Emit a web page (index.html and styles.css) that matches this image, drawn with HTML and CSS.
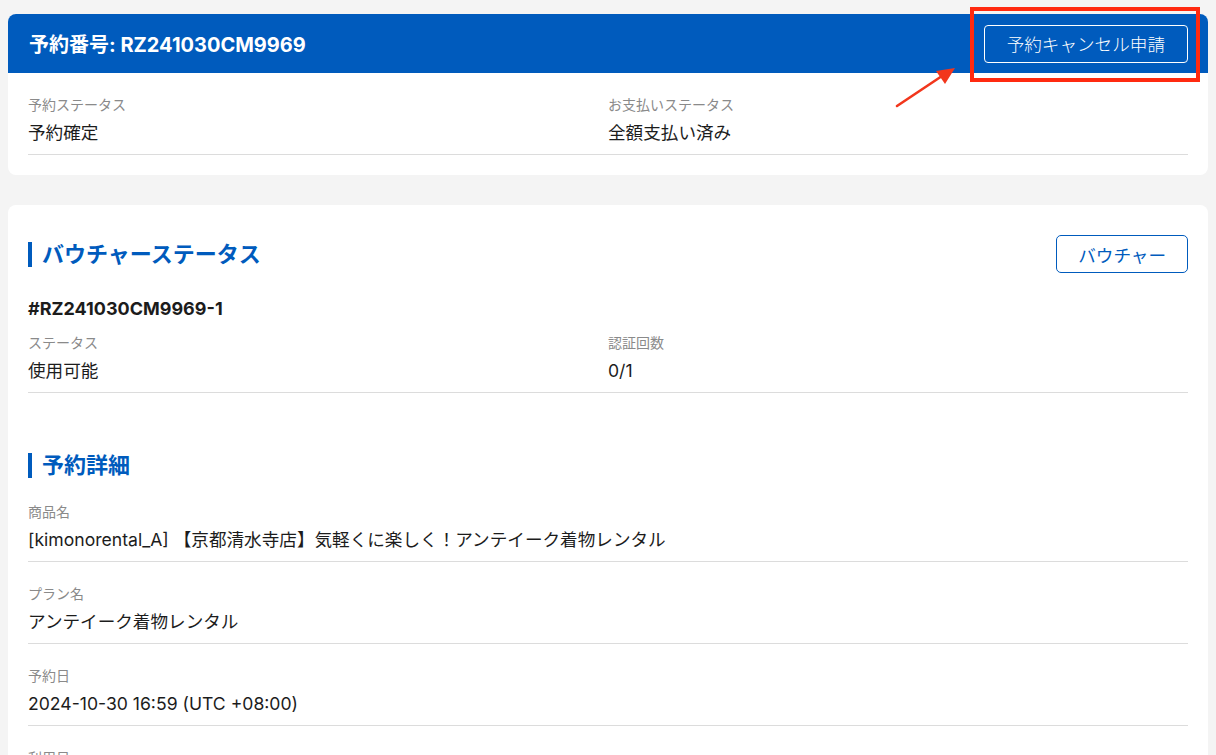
FILE: index.html
```html
<!DOCTYPE html>
<html lang="ja">
<head>
  <meta charset="UTF-8" />
  <meta name="viewport" content="width=device-width, initial-scale=1.0"/>
  <title>予約詳細</title>
  <link rel="stylesheet" href="styles.css">
</head>
<body>

<!-- Reservation summary -->
<div class="card summary">
  <div class="card-header">
    <h1>予約番号: RZ241030CM9969</h1>
    <button class="cancel-btn">予約キャンセル申請</button>
  </div>
  <div class="card-body">
    <div class="info-grid">
      <div class="info">
        <div class="label">予約ステータス</div>
        <div class="value">予約確定</div>
      </div>
      <div class="info">
        <div class="label">お支払いステータス</div>
        <div class="value">全額支払い済み</div>
      </div>
    </div>
  </div>

  <!-- annotation overlay -->
  <div class="mark-box"></div>
  <svg class="mark-arrow" width="70" height="50" viewBox="0 0 70 50">
    <line x1="4" y1="44" x2="52" y2="12" stroke="#f2361c" stroke-width="2.6" stroke-linecap="round"/>
    <polygon points="62,6 43,9 52,22" fill="#f2361c"/>
  </svg>
</div>

<!-- Voucher + details -->
<div class="card detail">
  <div class="section-head">
    <h2 class="section-title">バウチャーステータス</h2>
    <button class="outline-btn">バウチャー</button>
  </div>

  <div class="voucher-id">#RZ241030CM9969-1</div>
  <div class="info-grid">
    <div class="info">
      <div class="label">ステータス</div>
      <div class="value">使用可能</div>
    </div>
    <div class="info">
      <div class="label">認証回数</div>
      <div class="value">0/1</div>
    </div>
  </div>

  <h2 class="section-title detail-title">予約詳細</h2>

  <div class="info">
    <div class="label">商品名</div>
    <div class="value">[kimonorental_A] 【京都清水寺店】気軽くに楽しく！アンテイーク着物レンタル</div>
  </div>
  <div class="info next">
    <div class="label">プラン名</div>
    <div class="value">アンテイーク着物レンタル</div>
  </div>
  <div class="info next">
    <div class="label">予約日</div>
    <div class="value">2024-10-30 16:59 (UTC +08:00)</div>
  </div>
  <div class="info next">
    <div class="label">利用日</div>
    <div class="value">2024-11-02</div>
  </div>
</div>

</body>
</html>
```

FILE: styles.css
```css
body {
  font-family: Inter, "Noto Sans CJK JP", sans-serif;
  margin: 0;
  padding: 14px 8px;
  background-color: #f4f4f4;
  color: #1c1c1c;
}

.card {
  background: white;
  border-radius: 8px;
}

.summary {
  position: relative;
  padding-bottom: 20px;
}

.card-header {
  display: flex;
  align-items: center;
  justify-content: space-between;
  height: 59px;
  padding: 0 20px 0 21px;
  background-color: #005bbd;
  border-radius: 8px 8px 0 0;
}

.card-header h1 {
  margin: 0;
  color: white;
  font-size: 20px;
  font-weight: 700;
}

.cancel-btn {
  height: 38px;
  padding: 0 22px;
  background: transparent;
  border: 1px solid white;
  border-radius: 4px;
  color: white;
  font-family: inherit;
  font-size: 17.6px;
  font-weight: 300;
}

.card-body {
  padding: 22px 20px 0;
}

.info-grid {
  display: grid;
  grid-template-columns: 1fr 1fr;
  border-bottom: 1px solid #dcdcdc;
}

.info-grid .info {
  border-bottom: none;
}

.info {
  padding-bottom: 9px;
  border-bottom: 1px solid #dcdcdc;
}

.info.next {
  margin-top: 22px;
}

.label {
  font-size: 14px;
  line-height: 20px;
  color: #8a8a8a;
}

.value {
  margin-top: 6px;
  font-size: 17.6px;
  line-height: 24px;
  color: #1c1c1c;
}

/* annotation */
.mark-box {
  position: absolute;
  left: 962px;
  top: -7px;
  width: 222px;
  height: 67px;
  border: 4px solid #ff2a10;
}

.mark-arrow {
  position: absolute;
  left: 885px;
  top: 48px;
}

.detail {
  margin-top: 30px;
  padding: 30px 20px 40px;
  height: 530px;
  overflow: hidden;
}

.section-head {
  display: flex;
  align-items: center;
  justify-content: space-between;
}

.section-title {
  margin: 0;
  padding-left: 10px;
  border-left: 4px solid #005bbd;
  color: #005bbd;
  font-size: 22px;
  font-weight: 700;
  line-height: 25px;
}

.outline-btn {
  height: 38px;
  padding: 0 21px;
  background: white;
  border: 1px solid #005bbd;
  border-radius: 5px;
  color: #005bbd;
  font-family: inherit;
  font-size: 17.6px;
}

.voucher-id {
  margin-top: 24px;
  font-size: 18px;
  font-weight: 700;
  line-height: 24px;
}

.detail .info-grid {
  margin-top: 12px;
}

.detail-title {
  margin-top: 60px;
  margin-bottom: 24px;
}
```
